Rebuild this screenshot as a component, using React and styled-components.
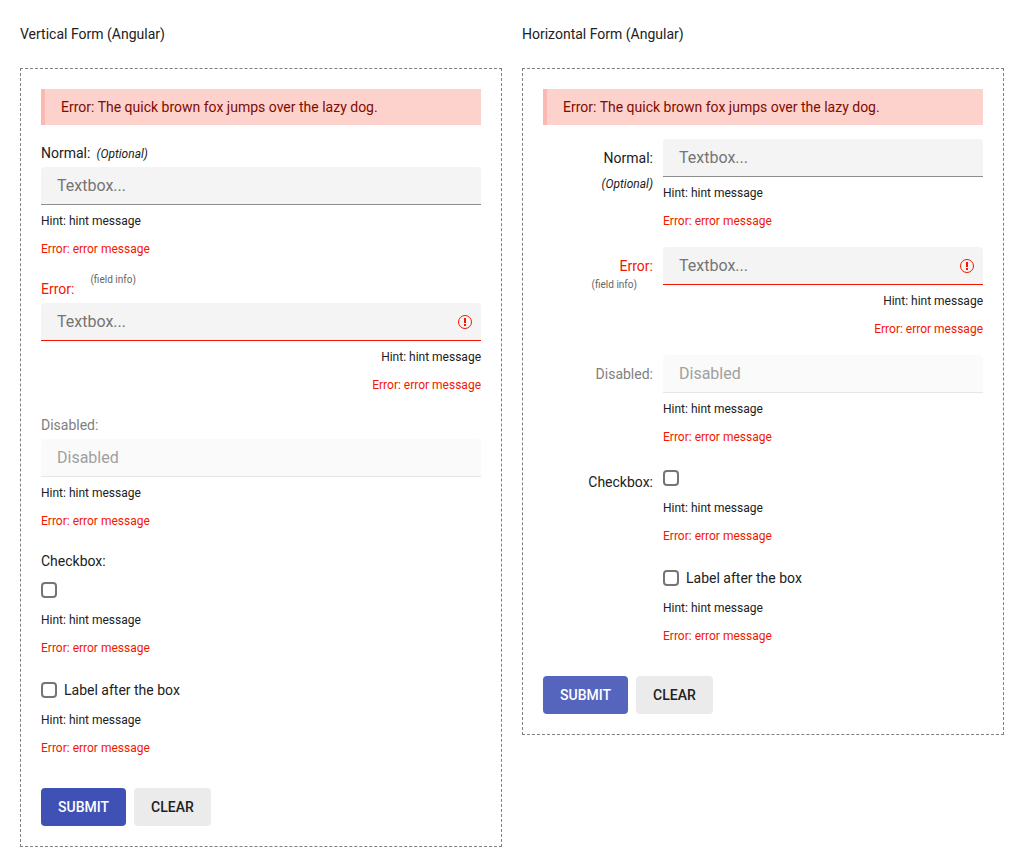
import React, { useId } from "react";
import styled, { createGlobalStyle, css } from "styled-components";

const GlobalStyle = createGlobalStyle`
  *, *::before, *::after { box-sizing: border-box; }
  body {
    margin: 0;
    background: #fff;
    color: #212121;
    font: 400 14px/20px Roboto, "Liberation Sans", sans-serif;
  }
`;

const Page = styled.main`
  display: grid;
  grid-template-columns: repeat(auto-fit, minmax(400px, 1fr));
  align-items: start;
  gap: 20px;
  padding: 24px 20px 20px;
`;

const Title = styled.h2`
  margin: 0 0 24px;
  font-size: 14px;
  font-weight: 400;
  line-height: 20px;
`;

const Form = styled.form`
  padding: 20px;
  border: 1px dashed #808080;
`;

const Alert = styled.div`
  padding: 8px 16px;
  border-left: 4px solid #fcb9b3;
  background: #fdd1cc;
  color: #7e0c00;
`;

const Fields = styled.div`
  display: grid;
  gap: ${(p) => (p.$horizontal ? 12 : 16)}px;
  margin-top: ${(p) => (p.$horizontal ? 14 : 18)}px;
`;

const FieldRow = styled.div`
  ${(p) =>
    p.$horizontal &&
    css`
      display: grid;
      grid-template-columns: 110px minmax(0, 1fr);
      column-gap: 10px;
    `}
`;

const LabelCell = styled.div`
  ${(p) =>
    p.$horizontal
      ? css`
          display: flex;
          flex-direction: column;
          align-items: flex-end;
          padding-top: 9px;
        `
      : css`
          margin-bottom: ${p.$spacing}px;
        `}
`;

const Label = styled.label`
  color: ${(p) => (p.$tone === "error" ? "#f31700" : p.$tone === "disabled" ? "#808080" : "inherit")};
`;

const Optional = styled.span`
  font-size: 12px;
  font-style: italic;
  line-height: 16px;
  margin: ${(p) => (p.$horizontal ? "8px 0 0" : "0 0 0 6px")};
`;

const FieldInfo = styled.span`
  color: #666;
  font-size: 10px;
  ${(p) =>
    p.$horizontal
      ? css`
          margin-right: 16px;
          line-height: 18px;
        `
      : css`
          margin-left: 16px;
          line-height: 0;
          vertical-align: 11px;
        `}
`;

const Content = styled.div`
  min-width: 0;
`;

const InputBox = styled.div`
  display: flex;
  align-items: center;
  height: 38px;
  border-bottom: 1px solid ${(p) => (p.$tone === "error" ? "#f31700" : p.$tone === "disabled" ? "#e6e6e6" : "#8e8e8e")};
  border-radius: 4px 4px 0 0;
  background: ${(p) => (p.$tone === "disabled" ? "#fafafa" : "#f4f4f4")};
`;

const TextInput = styled.input`
  flex: 1;
  min-width: 0;
  height: 37px;
  padding: 0 16px;
  border: 0;
  outline: 0;
  background: transparent;
  color: inherit;
  font: inherit;
  font-size: 16px;
  line-height: 24px;

  &::placeholder { color: #757575; opacity: 1; }
  &:disabled::placeholder { color: #a0a0a0; }
`;

const ErrorIcon = styled.svg`
  flex: none;
  width: 16px;
  height: 16px;
  margin-right: 8px;
`;

const CheckRow = styled.div`
  display: flex;
  align-items: center;
  gap: 7px;
  height: 24px;
  margin-top: ${(p) => p.$lead}px;
`;

const Checkbox = styled.input`
  appearance: none;
  flex: none;
  width: 16px;
  height: 16px;
  margin: 0;
  border: 2px solid #757575;
  border-radius: 4px;
  background: #fff;

  &:checked { border-color: #3f51b5; background: #3f51b5; }
`;

const Messages = styled.div`
  margin-top: ${(p) => (p.$check ? 4 : 2)}px;
  font-size: 12px;
  line-height: 28px;
  text-align: ${(p) => (p.$end ? "right" : "left")};
`;

const ErrorMessage = styled.div`
  color: #f31700;
`;

const Actions = styled.div`
  display: flex;
  gap: 8px;
  margin-top: 26px;
`;

const Button = styled.button`
  padding: 8px 16px;
  border: 1px solid transparent;
  border-radius: 4px;
  background: ${(p) => (p.$primary ? (p.$hovered ? "#5565bd" : "#3f51b5") : "#ebebeb")};
  color: ${(p) => (p.$primary ? "#fff" : "#212121")};
  font: inherit;
  font-weight: 500;
  text-transform: uppercase;
`;

const fields = [
  { kind: "text", label: "Normal:", optional: true, placeholder: "Textbox..." },
  { kind: "text", label: "Error:", info: true, tone: "error", placeholder: "Textbox...", end: true },
  { kind: "text", label: "Disabled:", tone: "disabled", placeholder: "Disabled" },
  { kind: "check", label: "Checkbox:" },
  { kind: "check", after: "Label after the box" },
];

function Field({ field, horizontal }) {
  const id = useId();
  const isCheck = field.kind === "check";
  const lead = horizontal ? (field.label ? 3 : 4) : 0;

  return (
    <FieldRow $horizontal={horizontal}>
      {(field.label || horizontal) && (
        <LabelCell $horizontal={horizontal} $spacing={isCheck ? 7 : 4}>
          {field.label && <Label htmlFor={id} $tone={field.tone}>{field.label}</Label>}
          {field.optional && <Optional $horizontal={horizontal}>(Optional)</Optional>}
          {field.info && <FieldInfo $horizontal={horizontal}>(field info)</FieldInfo>}
        </LabelCell>
      )}
      <Content>
        {isCheck ? (
          <CheckRow $lead={lead}>
            <Checkbox type="checkbox" id={id} />
            {field.after && <Label htmlFor={id}>{field.after}</Label>}
          </CheckRow>
        ) : (
          <InputBox $tone={field.tone}>
            <TextInput
              id={id}
              type="text"
              placeholder={field.placeholder}
              disabled={field.tone === "disabled"}
              aria-invalid={field.tone === "error"}
            />
            {field.tone === "error" && (
              <ErrorIcon viewBox="0 0 16 16" aria-hidden="true">
                <circle cx="8" cy="8" r="6.5" fill="none" stroke="#f31700" />
                <path d="M7 4h2v5H7zM7 10h2v2H7z" fill="#f31700" />
              </ErrorIcon>
            )}
          </InputBox>
        )}
        <Messages $check={isCheck} $end={field.end}>
          <div>Hint: hint message</div>
          <ErrorMessage>Error: error message</ErrorMessage>
        </Messages>
      </Content>
    </FieldRow>
  );
}

function FormPanel({ title, horizontal = false }) {
  return (
    <section>
      <Title>{title}</Title>
      <Form onSubmit={(e) => e.preventDefault()}>
        <Alert role="alert">Error: The quick brown fox jumps over the lazy dog.</Alert>
        <Fields $horizontal={horizontal}>
          {fields.map((field, i) => (
            <Field key={i} field={field} horizontal={horizontal} />
          ))}
        </Fields>
        <Actions>
          <Button type="submit" $primary $hovered={horizontal}>Submit</Button>
          <Button type="reset">Clear</Button>
        </Actions>
      </Form>
    </section>
  );
}

export default function App() {
  return (
    <>
      <GlobalStyle />
      <Page>
        <FormPanel title="Vertical Form (Angular)" />
        <FormPanel title="Horizontal Form (Angular)" horizontal />
      </Page>
    </>
  );
}
